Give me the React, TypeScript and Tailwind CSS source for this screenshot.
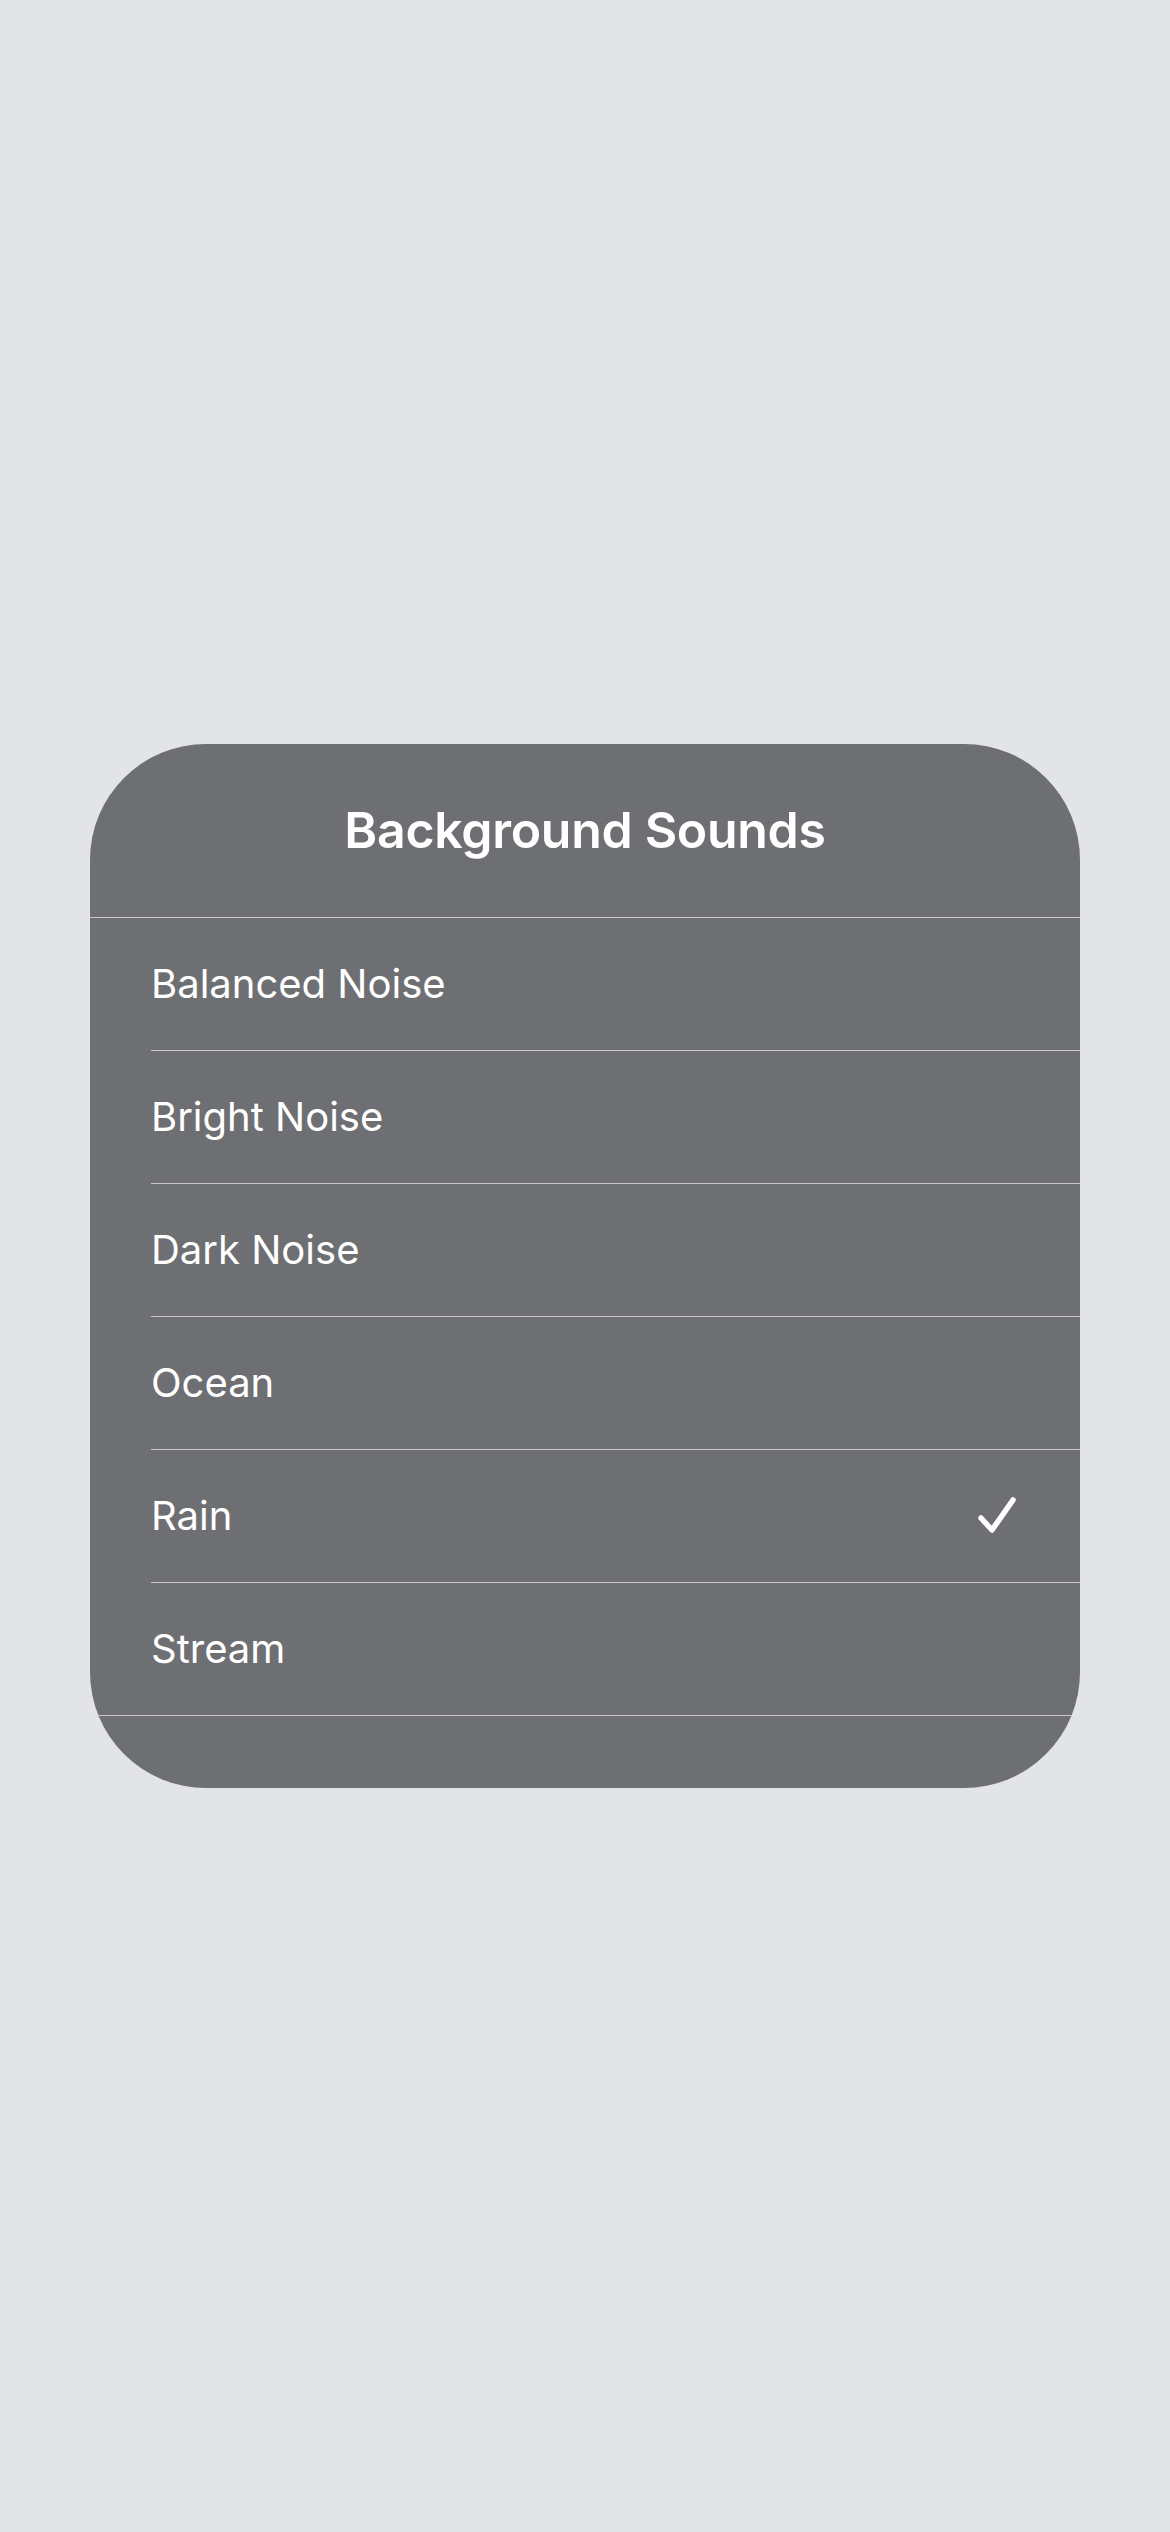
import React from "react";

const items = ["Balanced Noise", "Bright Noise", "Dark Noise", "Ocean", "Rain", "Stream"];

export default function App() {
  return (
    <div
      className="w-[1170px] h-[2532px] bg-[#e3e4e8] flex flex-col items-center pt-[744px]"
      style={{ fontFamily: "Inter, 'Noto Sans', sans-serif" }}
    >
      <div className="w-[990px] bg-[#6e6f73] rounded-[116px] overflow-hidden flex flex-col">
        <div className="h-[174px] flex items-center justify-center border-b border-[#c9c9cd]">
          <span className="text-white text-[50px] font-semibold tracking-[-0.3px]">Background Sounds</span>
        </div>
        <div className="flex flex-col">
          {items.map((name, i) => {
            const last = i === items.length - 1;
            return (
              <div key={name} className={last ? "border-b border-[#c9c9cd]" : ""}>
                <div className="pl-[61px]">
                  <div
                    className={
                      last
                        ? "h-[132px] flex items-center justify-between pr-[62px]"
                        : "h-[133px] flex items-center justify-between border-b border-[#c9c9cd] pr-[62px]"
                    }
                  >
                    <span className="text-white text-[40px] font-normal">{name}</span>
                    {name === "Rain" && (
                      <svg width="42" height="40" viewBox="0 0 42 40" fill="none">
                        <path
                          d="M5 22 L16 34 L37 4"
                          stroke="white"
                          strokeWidth="5.5"
                          strokeLinecap="round"
                          strokeLinejoin="round"
                        />
                      </svg>
                    )}
                  </div>
                </div>
              </div>
            );
          })}
        </div>
        <div className="h-[72px]" />
      </div>
    </div>
  );
}
